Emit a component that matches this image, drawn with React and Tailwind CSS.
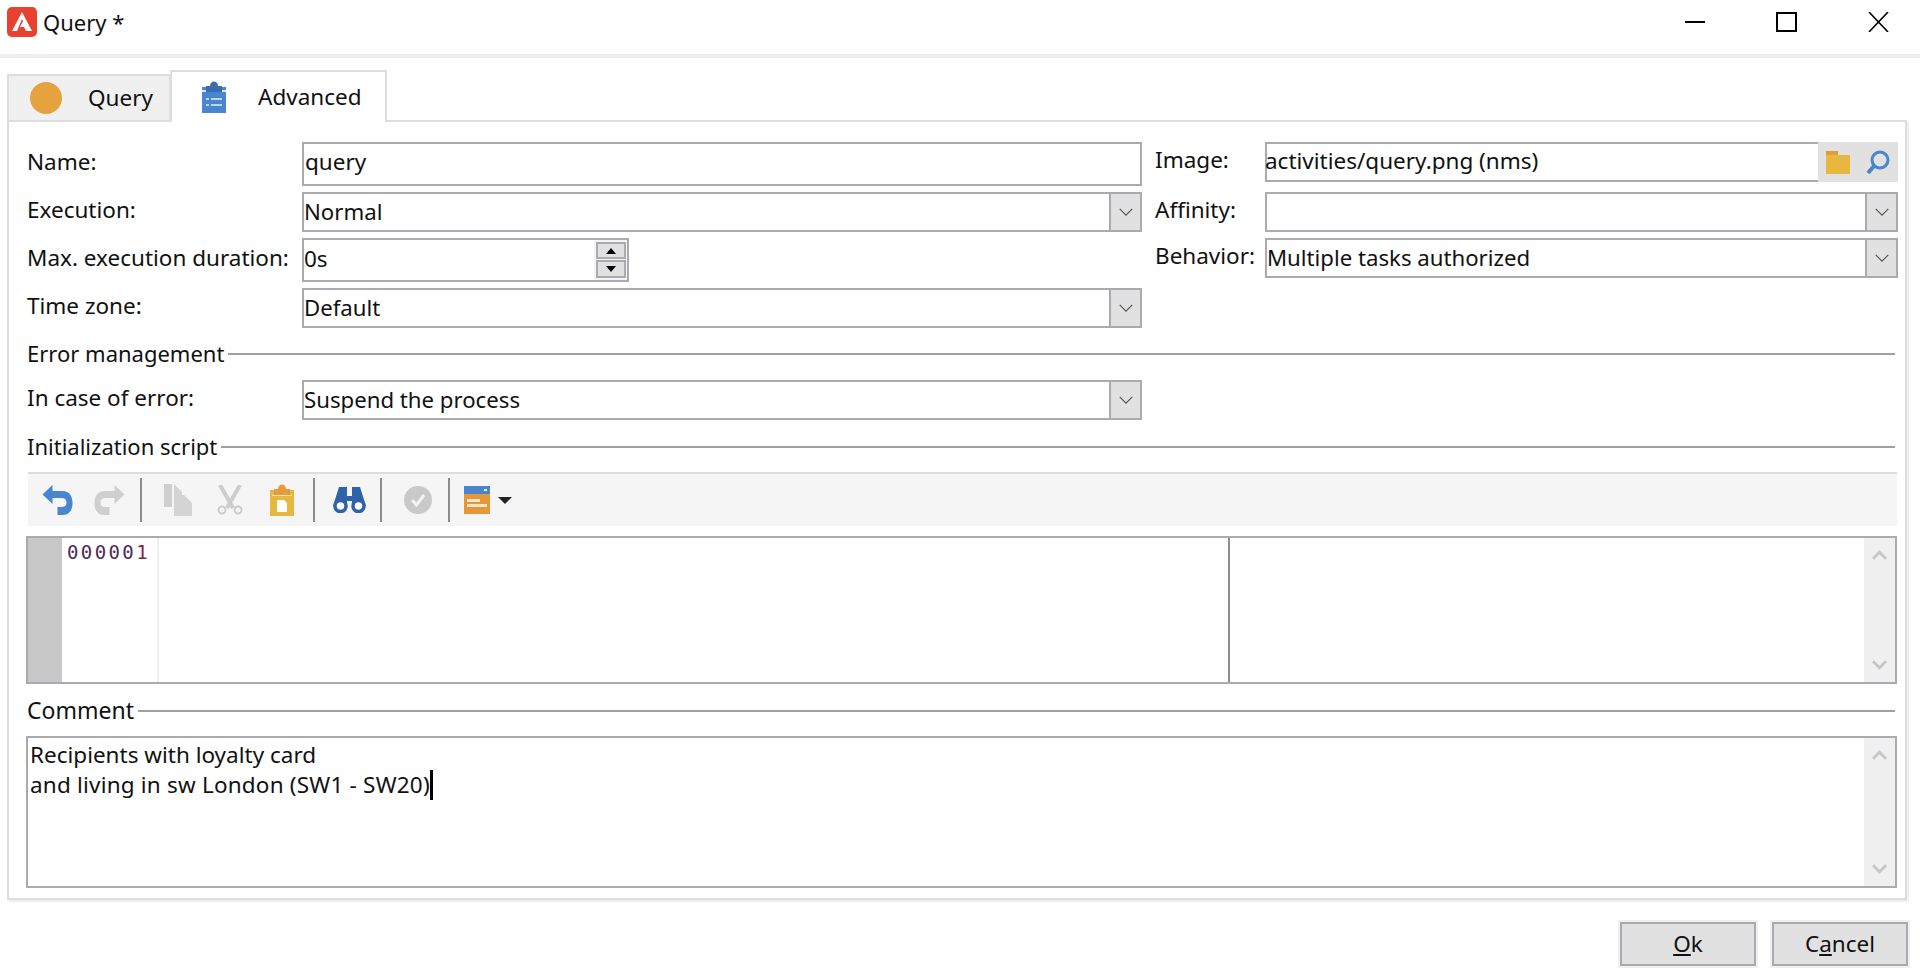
const Chevron = ({ up, className }) => (
  <svg viewBox="0 0 16 10" className={className} fill="none" stroke="currentColor">
    <path d={up ? "M1 9 8 2l7 7" : "M1 1l7 7 7-7"} />
  </svg>
);

// Select look-alike with the grey drop-down button on the right
const Select = ({ value, className = "" }) => (
  <div className={`flex h-[40px] border-2 border-[#aaabb0] bg-white ${className}`}>
    <div className="flex-1 text-[22.2px] leading-[36px]">{value}</div>
    <div className="flex w-[31px] items-center justify-center border-l-2 border-[#aaabb0] bg-[#e1e1e1]">
      <Chevron className="h-[9px] w-[16px] text-[#555] [stroke-width:1.3]" />
    </div>
  </div>
);

const Label = ({ children, className = "" }) => <div className={`pb-[4px] ${className}`}>{children}</div>;

const SectionTitle = ({ title, className = "" }) => (
  <div className={`flex h-[28px] items-center gap-[4px] pl-[1px] pr-[3px] ${className}`}>
    <span className="-mt-[2px] leading-none">{title}</span>
    <div className="h-[2px] flex-1 bg-[#a0a0a0]" />
  </div>
);

const Scrollbar = () => (
  <div className="flex w-[31px] flex-col items-center justify-between bg-[#f0f0f0]">
    <Chevron up className="mt-[11px] h-[12px] w-[15px] text-[#c6c6c6] [stroke-width:3]" />
    <Chevron className="mb-[11px] h-[12px] w-[15px] text-[#c6c6c6] [stroke-width:3]" />
  </div>
);

const Sep = () => <div className="h-[44px] w-[2px] shrink-0 bg-[#8c8c8c]" />;

const Spinner = () => (
  <div className="flex w-[33px] flex-col items-center justify-center gap-[1px] bg-[#f4f4f4]">
    <div className="flex h-[17px] w-[30px] items-center justify-center border-2 border-[#aaabb0] bg-[#e1e1e1]">
      <div className="h-0 w-0 border-x-[5px] border-b-[6px] border-x-transparent border-b-black" />
    </div>
    <div className="flex h-[18px] w-[30px] items-center justify-center border-2 border-[#aaabb0] bg-[#e1e1e1]">
      <div className="h-0 w-0 border-x-[5px] border-t-[6px] border-x-transparent border-t-black" />
    </div>
  </div>
);

const Toolbar = () => (
  <div className="ml-[2px] mr-[1px] mt-[11px] flex h-[54px] items-center border-t-2 border-[#dcdcdc] bg-[#f5f5f5] pl-[13px]">
    {/* undo */}
    <svg viewBox="0 0 32 30" className="h-[30px] w-[33px]" fill="none">
      <path d="M11 0 1 9.500 11 19v-6h9c3.500 0 5 1.500 5 4.500S23.500 22 20 22h-4v8h5c7 0 10-5 10-12S28 6 21 6H11z" fill="#4a86cf" />
    </svg>
    {/* redo */}
    <svg viewBox="0 0 32 30" className="ml-[19px] h-[30px] w-[33px]" fill="none">
      <path d="M21 0l10 9.500L21 19v-6h-9c-3.500 0-5 1.500-5 4.500S8.500 22 12 22h4v8h-5C4 30 1 25 1 18S4 6 11 6h10z" fill="#cfcfcf" />
    </svg>
    <div className="ml-[14px]"><Sep /></div>
    {/* copy */}
    <svg viewBox="0 0 28 32" className="ml-[22px] h-[32px] w-[28px]">
      <path d="M0 0h8v23H0z" fill="#cfcfcf" />
      <path d="M10 0l8 8v3h2l8 8v13H10z" fill="#d4d4d4" />
    </svg>
    {/* cut */}
    <svg viewBox="0 0 28 30" className="ml-[24px] h-[30px] w-[28px]" fill="none" stroke="#cdcdcd">
      <path d="M4 0l13 23M24 0 11 23" strokeWidth="4" />
      <circle cx="6" cy="25" r="3.500" strokeWidth="2" />
      <circle cx="22" cy="25" r="3.500" strokeWidth="2" />
    </svg>
    {/* paste */}
    <svg viewBox="0 0 24 32" className="ml-[26px] h-[32px] w-[24px]">
      <path d="M0 6h24v26H0z" fill="#e6b840" />
      <path d="M8 5c0-6 8-6 8 0h4v6H4V5z" fill="#e59a3c" />
      <path d="M2 11h20v1H2z" fill="#f6e6b8" />
      <path d="M7 16h7l3 3v9H7z" fill="#fff" />
    </svg>
    <div className="ml-[19px]"><Sep /></div>
    {/* find */}
    <svg viewBox="0 0 33 26" className="ml-[18px] h-[26px] w-[33px]" fill="#2f62a8">
      <path d="M6 0h8v9h5V0h8l6 19H19v-5h-5v5H0z" />
      <circle cx="7.500" cy="19" r="5.500" fill="#fff" stroke="#2f62a8" strokeWidth="3.500" />
      <circle cx="25.500" cy="19" r="5.500" fill="#fff" stroke="#2f62a8" strokeWidth="3.500" />
    </svg>
    <div className="ml-[14px]"><Sep /></div>
    {/* check */}
    <svg viewBox="0 0 28 28" className="ml-[22px] h-[28px] w-[28px]" fill="none">
      <circle cx="14" cy="14" r="14" fill="#c9c9c9" />
      <path d="M8 14l4.500 5L20 9" stroke="#f3f3f3" strokeWidth="3" />
    </svg>
    <div className="ml-[16px]"><Sep /></div>
    {/* view */}
    <svg viewBox="0 0 26 28" className="ml-[14px] h-[28px] w-[26px]">
      <path d="M0 0h26v8H0z" fill="#4a86cf" />
      <path d="M0 8h26v20H0z" fill="#e5983a" />
      <path d="M3 13h13v3H3zM3 18h20v3H3z" fill="#f8e6c4" />
      <path d="M20 3h3v2h-3z" fill="#fff" />
    </svg>
    <div className="ml-[8px] h-0 w-0 border-x-[7px] border-t-[7px] border-x-transparent border-t-[#222]" />
  </div>
);

const Editor = () => (
  <div className="mt-[10px] mr-[1px] flex h-[148px] border-2 border-[#aaabb0] bg-white">
    <div className="w-[34px] bg-[#c8c8c8]" />
    <div className="w-[97px] border-r-2 border-[#eeeeee] pl-[5px] pt-[2px] font-['DejaVu_Sans_Mono',monospace] text-[19px] leading-[24px] tracking-[2.4px] text-[#4c2a58]">
      00000<span className="text-[#8a1c3c]">1</span>
    </div>
    <div className="flex-1" />
    <div className="w-[636px] border-l-2 border-[#8c8c8c]" />
    <Scrollbar />
  </div>
);

const App = () => {
  return (
    <div className="flex h-[976px] w-full flex-col overflow-hidden bg-white font-['Noto_Sans',sans-serif] text-[22.5px] text-[#111]">
      {/* Title bar */}
      <div className="flex h-[54px] items-center pb-[10px] pl-[7px] pr-[31px]">
        <svg viewBox="0 0 30 30" className="h-[30px] w-[30px]">
          <rect width="30" height="30" rx="5" fill="#e8412f" />
          <path d="M15 5 25 24h-6l-2-4h-4l3-6-1-2-5 12H5z" fill="#fff" />
        </svg>
        <span className="ml-[6px] text-[22px]">Query *</span>
        {/* window controls */}
        <div className="ml-auto flex items-center gap-[71px]">
          <div className="h-[2px] w-[20px] bg-black" />
          <div className="h-[20px] w-[21px] border-2 border-black" />
          <svg viewBox="0 0 21 20" className="h-[20px] w-[21px]" fill="none" stroke="#000" strokeWidth="1.600">
            <path d="M1 0l19 20M20 0 1 20" />
          </svg>
        </div>
      </div>
      <div className="h-[4px] bg-[#f0f0f0]" />

      {/* Tabs */}
      <div className="relative z-10 -mb-[2px] ml-[7px] mt-[12px] flex items-end">
        <div className="flex h-[48px] w-[164px] items-center border-2 border-[#dddddd] bg-[#f0f0f0] pl-[21px]">
          <div className="h-[32px] w-[32px] rounded-full bg-[#e5a23e]" />
          <span className="ml-[26px]">Query</span>
        </div>
        <div className="-ml-[1px] flex h-[52px] w-[217px] items-center border-2 border-b-0 border-[#dddddd] bg-white pl-[30px]">
          <svg viewBox="0 0 24 32" className="h-[32px] w-[24px]">
            <path d="M0 6h24v26H0z" fill="#4a86cf" />
            <path d="M8 5c0-6 8-6 8 0h4v6H4V5z" fill="#3c6cb0" />
            <path d="M0 9h4v2h16V9h4v2H0z" fill="#dfe9f6" />
            <path d="M4 17h3v2H4zM4 23h3v2H4zM9 17h11v2H9zM9 23h11v2H9z" fill="#bcd3ef" />
          </svg>
          <span className="ml-[32px]">Advanced</span>
        </div>
      </div>

      {/* Panel */}
      <div className="ml-[7px] h-[780px] w-[1900px] border-2 border-[#dddddd] pl-[17px] pr-[7px] pt-[20px] shadow-[2px_2px_0_#f0f0f0]">
        <div className="flex gap-[13px]">
          <div className="grid w-[1116px] grid-cols-[276px_1fr] grid-rows-[44px_40px_44px_40px] items-center gap-y-[6px]">
            <Label className="pl-[1px]">Name:</Label>
            <div className="h-[44px] border-2 border-[#aaabb0] pl-[1px] leading-[36px]">query</div>
            <Label className="pl-[1px]">Execution:</Label>
            <Select value="Normal" />
            <Label className="pl-[1px]">Max. execution duration:</Label>
            <div className="flex h-[44px] w-[327px] border-2 border-[#aaabb0]">
              <div className="flex-1 leading-[38px]">0s</div>
              <Spinner />
            </div>
            <Label className="pl-[1px]">Time zone:</Label>
            <Select value="Default" />
          </div>
          <div className="grid w-[743px] grid-cols-[110px_1fr] grid-rows-[44px_40px_44px] items-start gap-y-[6px]">
            <div className="leading-[36px]">Image:</div>
            <div className="flex h-[40px]">
              <div className="flex-1 border-2 border-r-0 border-[#aaabb0] indent-[-2px] leading-[34px]">activities/query.png (nms)</div>
              <div className="flex w-[80px] items-center justify-end gap-[16px] bg-[#e1e1e1] pr-[8px]">
                <svg viewBox="0 0 24 23" className="h-[23px] w-[24px]">
                  <path d="M0 0h12v4H0z" fill="#e59a3c" />
                  <path d="M0 4h24v19H0z" fill="#e6b840" />
                </svg>
                <svg viewBox="0 0 24 24" className="h-[24px] w-[24px]" fill="none" stroke="#4a86cf" strokeWidth="3">
                  <circle cx="14" cy="10" r="8" />
                  <path d="M8 16l-6 7" strokeWidth="4" />
                </svg>
              </div>
            </div>
            <div className="leading-[36px]">Affinity:</div>
            <Select value="" />
            <div className="leading-[36px]">Behavior:</div>
            <Select value="Multiple tasks authorized" />
          </div>
        </div>

        <SectionTitle title="Error management" className="mt-[12px] text-[22px]" />
        <div className="mt-[12px] grid w-[1116px] grid-cols-[276px_1fr] items-center">
          <Label className="pl-[1px]">In case of error:</Label>
          <Select value="Suspend the process" />
        </div>

        <SectionTitle title="Initialization script" className="mt-[13px] text-[22px]" />
        <Toolbar />
        <Editor />

        <SectionTitle title="Comment" className="mt-[13px] text-[23px]" />
        <div className="mt-[11px] mr-[1px] flex h-[152px] border-2 border-[#aaabb0]">
          <div className="flex-1 pl-[2px] pt-[2px] leading-[30px]">
            <div>Recipients with loyalty card</div>
            <div className="flex items-center tracking-[0.2px]">
              and living in sw London (SW1 - SW20)
              <div className="h-[30px] w-[3px] bg-black" />
            </div>
          </div>
          <Scrollbar />
        </div>
      </div>

      {/* Footer buttons */}
      <div className="mr-[12px] mt-[22px] flex justify-end gap-[16px]">
        <button className="h-[44px] w-[136px] border-2 border-[#aaabb0] bg-[#e1e1e1] outline-2 outline-[#f0f0f0]">
          <span className="underline underline-offset-2">O</span>k
        </button>
        <button className="h-[44px] w-[136px] border-2 border-[#aaabb0] bg-[#e1e1e1] outline-2 outline-[#f0f0f0]">
          C<span className="underline underline-offset-2">a</span>ncel
        </button>
      </div>
    </div>
  );
};

export default App;
